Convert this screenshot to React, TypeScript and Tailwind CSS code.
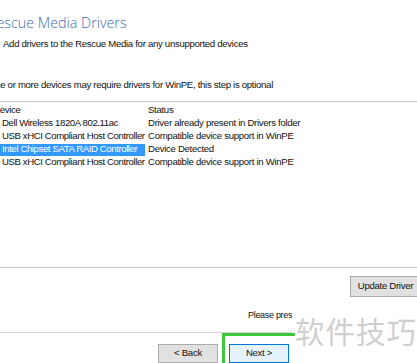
import React from "react";

const rows = [
  { device: "Dell Wireless 1820A 802.11ac", status: "Driver already present in Drivers folder" },
  { device: "USB xHCI Compliant Host Controller", status: "Compatible device support in WinPE" },
  { device: "Intel Chipset SATA RAID Controller", status: "Device Detected", selected: true },
  { device: "USB xHCI Compliant Host Controller", status: "Compatible device support in WinPE" },
];

export default function App() {
  return (
    <div
      className="relative h-[363px] w-[417px] overflow-hidden bg-white text-[9.6px] tracking-[-0.3px] text-[#111]"
      style={{ fontFamily: "'Liberation Sans', Arial, sans-serif" }}
    >
      {/* Header */}
      <div className="-mt-[10px] ml-[-38px] h-[13px] leading-[13px] text-[#444]">Create Rescue Media Wizard</div>
      <h1
        className="ml-[-12px] mt-[9px] h-[22px] text-[14.3px] font-light leading-[22px] tracking-normal text-[#3d6cb5]"
        style={{ fontFamily: "'Open Sans', 'Liberation Sans', sans-serif" }}
      >
        Rescue Media Drivers
      </h1>
      <p className="ml-[3px] mt-[3px] h-[13px] leading-[13px]">Add drivers to the Rescue Media for any unsupported devices</p>
      <p className="ml-[-12px] mt-[28px] h-[13px] leading-[13px]">One or more devices may require drivers for WinPE, this step is optional</p>

      {/* Device list */}
      <div className="mt-[10px] h-[167px] border-y border-[#c8c8c8]">
        <div className="flex h-[15px] items-center pt-[2px]">
          <span className="ml-[-7px] w-[155px]">Device</span>
          <span>Status</span>
        </div>
        {rows.map((r, i) => (
          <div key={i} className="flex h-[13px] items-center">
            <span
              className={`flex h-[12px] w-[145px] items-center whitespace-nowrap pl-[2px] tracking-[-0.4px] ${r.selected ? "bg-[#3399ff] text-white" : ""}`}
            >
              {r.device}
            </span>
            <span className="ml-[3px] whitespace-nowrap">{r.status}</span>
          </div>
        ))}
      </div>

      {/* Update button */}
      <div className="mt-[8px] flex justify-end">
        <button className="mr-[-4px] h-[21px] w-[71px] whitespace-nowrap border border-[#adadad] bg-[#e1e1e1]">
          Update Driver
        </button>
      </div>

      <div className="ml-[248px] mt-[13px] h-[10px] text-[9px] leading-[10px]">Please pres</div>

      {/* Footer */}
      <div className="mt-[12px] h-px w-[292px] bg-[#d4d4d4]" />
      <div className="ml-[158px] mt-[11px] flex gap-[11px]">
        <button className="h-[19px] w-[60px] border border-[#adadad] bg-[#e1e1e1]">&lt; Back</button>
        <button className="h-[19px] w-[60px] border border-[#0078d7] bg-[#e5f1fb]">Next &gt;</button>
      </div>

      {/* Annotation frame */}
      <div className="absolute left-[222px] top-[333px] h-[40px] w-[73px] border-l-[3px] border-t-[3px] border-[#3ec83e]" />
      {/* Watermark */}
      <div
        className="absolute left-[295px] top-[308px] text-[29.5px] tracking-[1px] text-[#cfcfcf]"
        style={{ fontFamily: "'Noto Sans CJK SC', sans-serif" }}
      >
        软件技巧
      </div>
    </div>
  );
}
